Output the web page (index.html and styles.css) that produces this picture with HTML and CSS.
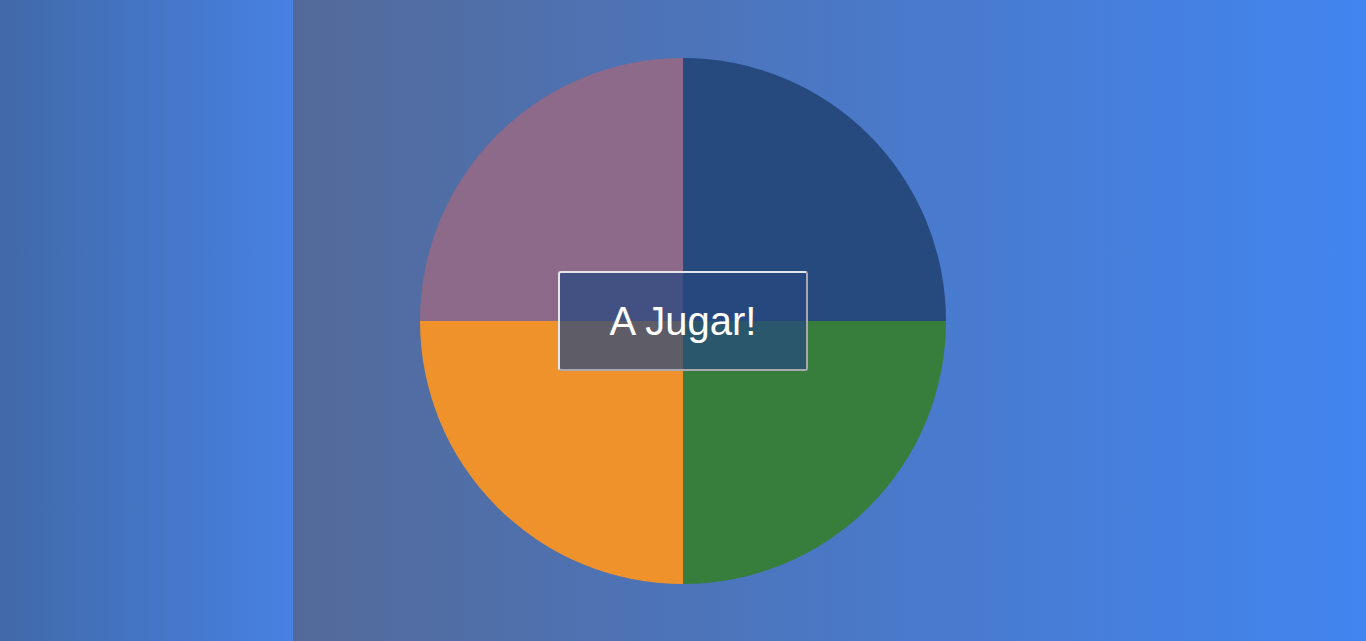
FILE: index.html
```html
<!DOCTYPE html>
<html lang="es">
<head>
<meta charset="utf-8">
<title>A Jugar!</title>
<link rel="stylesheet" href="styles.css">
</head>
<body>
<div class="page">
  <div class="backdrop">
    <aside class="side"></aside>
    <main class="main"></main>
  </div>
  <div class="stage">
    <div class="wheel">
      <div class="quarter q-purple"></div>
      <div class="quarter q-navy"></div>
      <div class="quarter q-orange"></div>
      <div class="quarter q-green"></div>
    </div>
    <button class="play" type="button">A Jugar!</button>
  </div>
</div>
</body>
</html>
```
FILE: styles.css
```css
html, body {
  margin: 0;
  padding: 0;
  height: 100%;
}
body {
  font-family: "Liberation Sans", Arial, sans-serif;
  overflow: hidden;
}
.page {
  display: grid;
  height: 641px;
  width: 1366px;
}
.backdrop,
.stage {
  grid-area: 1 / 1;
}
.backdrop {
  display: flex;
}
.side {
  width: 293px;
  flex: none;
  background: linear-gradient(to right, #4169a8, #4781e2);
}
.main {
  flex: 1;
  background: linear-gradient(to right, #536a99, #4285f0);
}
.stage {
  display: grid;
  place-items: center;
}
.wheel,
.play {
  grid-area: 1 / 1;
}
.wheel {
  width: 526px;
  height: 526px;
  border-radius: 50%;
  overflow: hidden;
  display: grid;
  grid-template-columns: 1fr 1fr;
  grid-template-rows: 1fr 1fr;
}
.q-purple { background: #8e6a8a; }
.q-navy { background: #26497e; }
.q-orange { background: #ef922b; }
.q-green { background: #377e3c; }
.play {
  width: 250px;
  height: 100px;
  box-sizing: border-box;
  margin-top: 1px;
  border: 2px solid;
  border-color: #e6e6ea #a8a8ae #a8a8ae #e6e6ea;
  border-radius: 3px;
  background: rgba(38, 73, 126, 0.73);
  color: #ffffff;
  font-family: "Liberation Sans", Arial, sans-serif;
  font-size: 40px;
  padding: 0;
  cursor: pointer;
}
```
